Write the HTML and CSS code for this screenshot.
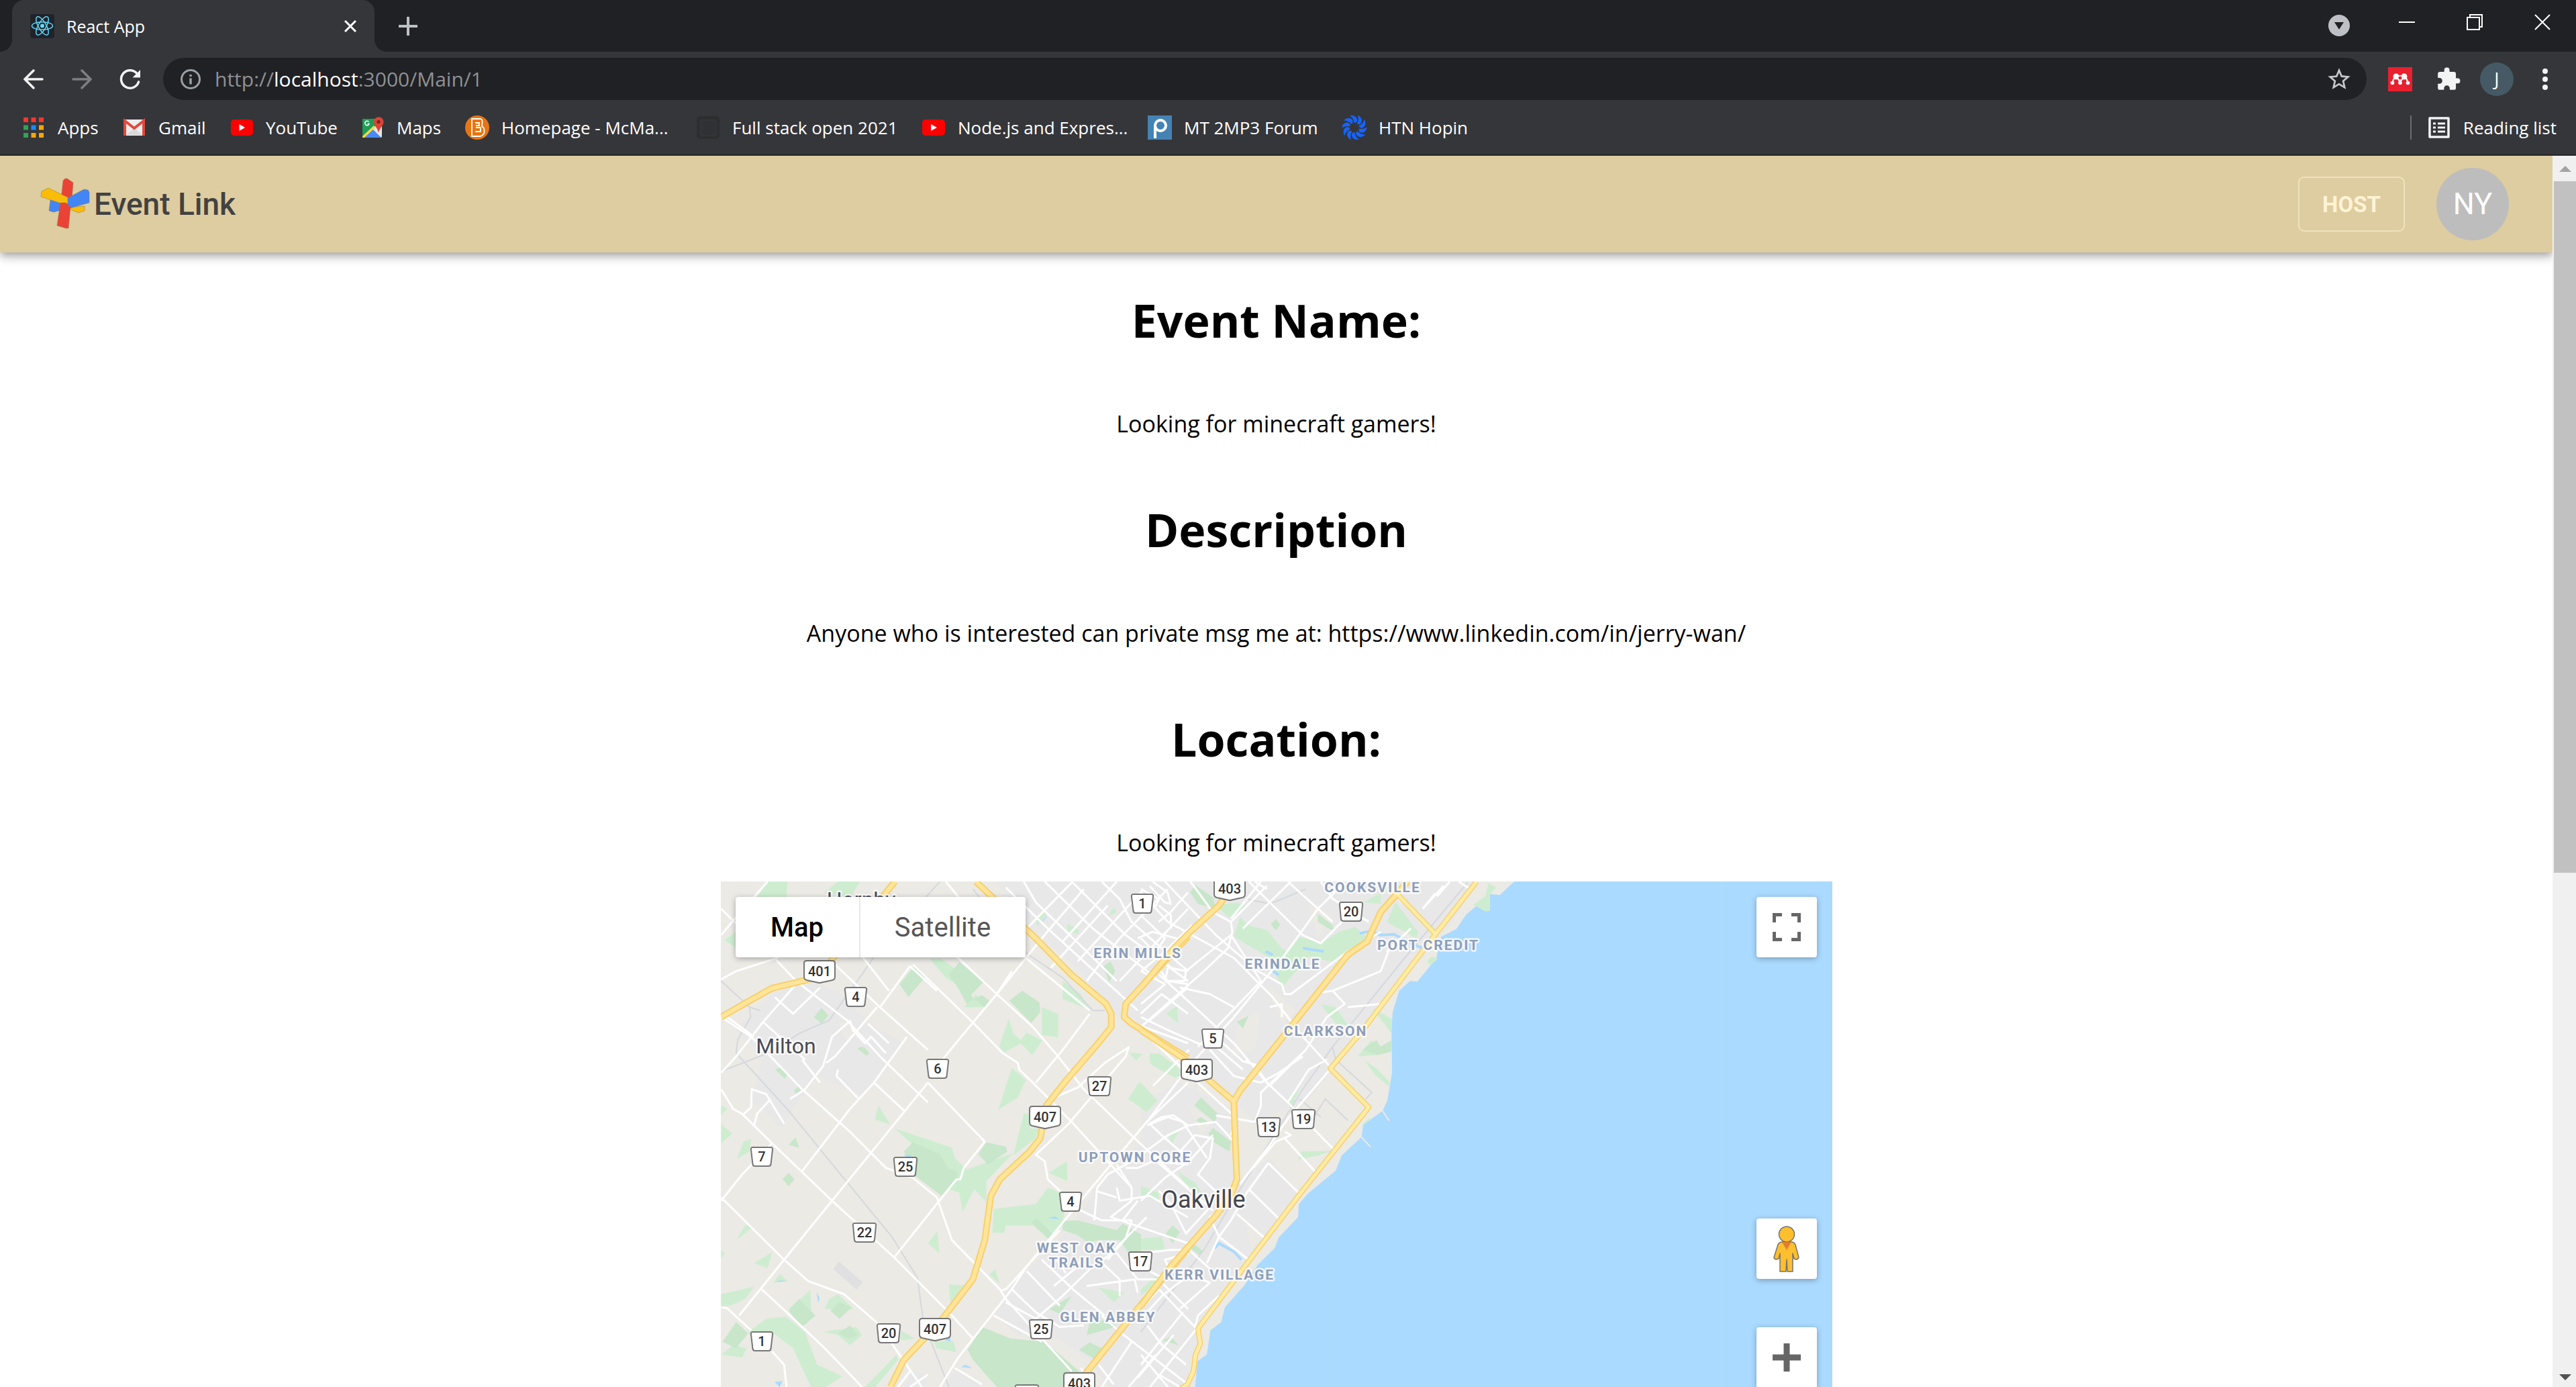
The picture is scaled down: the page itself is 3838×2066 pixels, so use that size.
FILE: index.html
```html
<!DOCTYPE html>
<html lang="en">
<head>
<meta charset="utf-8">
<title>React App</title>
<link rel="stylesheet" href="styles.css">
</head>
<body>
<div class="chrome">
  <div class="tabstrip">
    <div class="tab">
      <svg class="ico36" viewBox="0 0 36 36"><rect width="36" height="36" rx="4" fill="#20232a"/><g fill="none" stroke="#61dafb" stroke-width="1.5"><ellipse cx="18" cy="17.500" rx="15.500" ry="5.800"/><ellipse cx="18" cy="17.500" rx="15.500" ry="5.800" transform="rotate(60 18 17.500)"/><ellipse cx="18" cy="17.500" rx="15.500" ry="5.800" transform="rotate(120 18 17.500)"/></g><circle cx="18" cy="17.500" r="3" fill="#61dafb"/></svg>
      <span class="tab-title">React App</span>
      <button class="plain tab-close" aria-label="Close tab"><svg width="18" height="18" viewBox="0 0 18 18"><path d="M1 1 17 17M17 1 1 17" stroke="#fff" stroke-width="3"/></svg></button>
    </div>
    <button class="plain newtab" aria-label="New tab"><svg width="28" height="28" viewBox="0 0 28 28"><path d="M14 1V27M1 14H27" stroke="#bdc1c6" stroke-width="4" stroke-linecap="round"/></svg></button>
    <div class="window-buttons">
      <button class="plain low" aria-label="Search tabs"><svg width="32" height="32" viewBox="0 0 32 32"><circle cx="16" cy="16" r="16" fill="#bdc1c6"/><path d="M9 11H23L16 22Z" fill="#202124"/></svg></button>
      <button class="plain" aria-label="Minimize"><svg width="24" height="24" viewBox="0 0 24 24"><path d="M0 12H24" stroke="#fff" stroke-width="2"/></svg></button>
      <button class="plain" aria-label="Restore"><svg width="24" height="24" viewBox="0 0 24 24"><path d="M1 5H19V23H1ZM5 5V1H23V19H19" fill="none" stroke="#fff" stroke-width="2"/></svg></button>
      <button class="plain" aria-label="Close"><svg width="24" height="24" viewBox="0 0 24 24"><path d="M1 1 23 23M23 1 1 23" stroke="#fff" stroke-width="2"/></svg></button>
    </div>
  </div>
  <div class="toolbar">
    <button class="plain tool" aria-label="Back"><svg width="30" height="30" viewBox="0 0 30 30"><path d="M28 15H2M15 2 2 15 15 28" fill="none" stroke="#f1f3f4" stroke-width="3.500" stroke-linecap="round"/></svg></button>
    <button class="plain tool" aria-label="Forward"><svg width="30" height="30" viewBox="0 0 30 30"><path d="M2 15H28M15 2 28 15 15 28" fill="none" stroke="#7d7f83" stroke-width="3.500" stroke-linecap="round"/></svg></button>
    <button class="plain tool" aria-label="Reload"><svg width="32" height="32" viewBox="0 0 32 32"><path d="M26.500 8A13.300 13.300 0 1 0 28.500 20" fill="none" stroke="#f1f3f4" stroke-width="3.500" stroke-linecap="round"/><path d="M31 2V13.500H19.500Z" fill="#f1f3f4"/></svg></button>
    <div class="omnibox">
      <svg width="32" height="32" viewBox="0 0 32 32"><circle cx="16" cy="16" r="13.500" fill="none" stroke="#9aa0a6" stroke-width="3"/><path d="M16 9V12M16 14.500V23.500" stroke="#9aa0a6" stroke-width="3.500"/></svg>
      <span class="url">http://<b>localhost</b>:3000/Main/1</span>
      <button class="plain" aria-label="Bookmark this page"><svg width="40" height="40" viewBox="0 0 24 24"><path d="M22 9.240 14.810 8.620 12 2 9.190 8.630 2 9.240 7.460 13.970 5.820 21 12 17.270 18.180 21 16.550 13.970ZM12 15.400 8.240 17.670 9.240 13.390 5.920 10.510 10.300 10.130 12 6.100 13.710 10.140 18.090 10.520 14.770 13.400 15.770 17.680Z" fill="#c6c8ca"/></svg></button>
    </div>
    <button class="plain tool" aria-label="Mendeley"><svg class="ico36" viewBox="0 0 36 36"><rect width="36" height="36" fill="#e9202f"/><path d="M6 23.500 10 14M30 23.500 26 14M14 16 18 23 22 16" fill="none" stroke="#fff" stroke-width="2"/><g fill="#fff"><circle cx="12" cy="14" r="4.500"/><circle cx="24" cy="14" r="4.500"/><circle cx="6.500" cy="23.500" r="2.800"/><circle cx="18" cy="23.500" r="2.800"/><circle cx="29.500" cy="23.500" r="2.800"/><circle cx="18" cy="16" r="4"/></g><circle cx="18" cy="16" r="2.500" fill="#e9202f"/></svg></button>
    <button class="plain tool" aria-label="Extensions"><svg width="38" height="38" viewBox="0 0 24 24"><path d="M20.500 11H19V7a2 2 0 0 0-2-2h-4V3.500a2.500 2.500 0 0 0-5 0V5H4a2 2 0 0 0-2 2v3.800h1.500a2.700 2.700 0 0 1 0 5.400H2V20a2 2 0 0 0 2 2h3.800v-1.500a2.700 2.700 0 0 1 5.400 0V22H17a2 2 0 0 0 2-2v-4h1.500a2.500 2.500 0 0 0 0-5Z" fill="#f1f3f4"/></svg></button>
    <button class="plain tool" aria-label="Profile"><span class="profile">J</span></button>
    <button class="plain tool" aria-label="Menu"><svg width="8" height="32" viewBox="0 0 8 32" fill="#f1f3f4"><circle cx="4" cy="4" r="4"/><circle cx="4" cy="16" r="4"/><circle cx="4" cy="28" r="4"/></svg></button>
  </div>
  <nav class="bookmarks">
    <div class="bookmark-list">
      <a href="#"><svg class="ico36" viewBox="0 0 36 36"><g fill="#f4382f"><path d="M3 3h7v7H3zM14.500 3h7v7h-7zM26 3h7v7h-7z"/></g><path d="M3 14.500h7v7H3zM3 26h7v7H3z" fill="#34a05a"/><path d="M14.500 14.500h7v7h-7z" fill="#1e88f5"/><path d="M26 14.500h7v7h-7zM14.500 26h7v7h-7zM26 26h7v7h-7z" fill="#f5a70a"/></svg>Apps</a>
      <a href="#"><svg class="ico36" viewBox="0 0 36 36"><path d="M3 6H33V30H3Z" fill="#ececec"/><path d="M6 29 18 19 30 29Z" fill="#d9d9d9"/><path d="M4 30V8L18 19 32 8V30" fill="none" stroke="#de4a3e" stroke-width="4"/></svg>Gmail</a>
      <a href="#"><svg class="ico36" viewBox="0 0 36 36"><rect x="2" y="6" width="33" height="24" rx="5" fill="#f00"/><path d="M14.500 13V23L23 18Z" fill="#fff"/></svg>YouTube</a>
      <a href="#"><svg class="ico36" viewBox="0 0 36 36"><rect x="3" y="5" width="29" height="28" rx="2" fill="#e6e6e6"/><path d="M3 5H26L23 15 3 33Z" fill="#1f9d57"/><path d="M4 33 18 20 31 33Z" fill="#4a89f3"/><path d="M3 31 20 15 22 18 6 33H3Z" fill="#ffd83b"/><path d="M12.500 9.500A3.200 3.200 0 1 0 13 12.500H10.500" stroke="#fff" stroke-width="1.500" fill="none"/><path d="M27 26C26 19 20 15 20 9.500a7 7 0 0 1 14.500 0C34.500 15 28 19 27 26Z" fill="#db4437"/><circle cx="27" cy="9.500" r="2.600" fill="#7b231c"/></svg>Maps</a>
      <a href="#"><svg class="ico36" viewBox="0 0 36 36"><circle cx="18" cy="18" r="18" fill="#e87511"/><path d="M10 5H23Q26 6 25.500 11L25 16Q29 18 28.500 25Q27 30 22 31H10Z" fill="none" stroke="#fff" stroke-width="1.800"/><path d="M15 11H21V15H16M16 18H23V24H15" fill="none" stroke="#fff" stroke-width="2"/></svg>Homepage - McMa...</a>
      <a href="#"><svg class="ico36" viewBox="0 0 36 36"><rect x="1" y="1" width="34" height="34" rx="5" fill="#2d2e30"/><rect x="7" y="7" width="23" height="23" rx="2" fill="#303134" stroke="#3a3b3e"/></svg>Full stack open 2021</a>
      <a href="#"><svg class="ico36" viewBox="0 0 36 36"><rect x="1" y="6" width="34" height="24" rx="5" fill="#f00"/><path d="M14 13V23L23 18Z" fill="#fff"/></svg>Node.js and Expres...</a>
      <a href="#"><svg class="ico36" viewBox="0 0 36 36"><rect width="36" height="36" fill="#4583b4"/><circle cx="19" cy="15" r="8" fill="none" stroke="#fff" stroke-width="4"/><path d="M11 34V15" stroke="#fff" stroke-width="4"/></svg>MT 2MP3 Forum</a>
      <a href="#"><svg class="ico36" viewBox="0 0 36 36" fill="#1664ff"><defs><path id="petal" d="M11 0C18-1 22 3 22 7Q22 11 17.500 11C17 6 15 3 11 0Z"/></defs><use href="#petal"/><use href="#petal" transform="rotate(36 18 18)"/><use href="#petal" transform="rotate(72 18 18)"/><use href="#petal" transform="rotate(108 18 18)"/><use href="#petal" transform="rotate(144 18 18)"/><use href="#petal" transform="rotate(180 18 18)"/><use href="#petal" transform="rotate(216 18 18)"/><use href="#petal" transform="rotate(252 18 18)"/><use href="#petal" transform="rotate(288 18 18)"/><use href="#petal" transform="rotate(324 18 18)"/></svg>HTN Hopin</a>
    </div>
    <a class="reading" href="#"><svg class="ico36" viewBox="0 0 36 36"><path d="M4 4H32V32H4Z" fill="none" stroke="#f1f3f4" stroke-width="3.500" stroke-linejoin="round"/><path d="M9 12H13M16 12H27M9 18H13M16 18H27M9 24H13M16 24H27" stroke="#f1f3f4" stroke-width="3"/></svg>Reading list</a>
  </nav>
</div>

<div class="viewport">
  <div class="page">
    <header class="appbar">
      <a class="brand" href="#">
        <svg width="78" height="78" viewBox="0 0 78 78"><g stroke="#8a7a50" stroke-opacity=".5"><path d="M15 33 38 30V46L20 51 13 49Z" fill="#4285f4"/><path d="M40 44 66 42V49L57 52 47 48Z" fill="#fbbc05"/><path d="M34 4 37 1H40L49 7 47 32H31Z" fill="#ea4335"/><path d="M35 33 65 17 71 18 73 21V37L41 46Z" fill="#4285f4"/><path d="M2 20 12 15 41 29V38L37 40 1 28Z" fill="#fbbc05"/><path d="M30 37 38 37 45 43 42 75H38L25 71Z" fill="#ea4335"/></g></svg>
        <span>Event Link</span>
      </a>
      <button class="host">HOST</button>
      <div class="avatar">NY</div>
    </header>
    <main class="content">
      <h1>Event Name:</h1>
      <p>Looking for minecraft gamers!</p>
      <h1>Description</h1>
      <p>Anyone who is interested can private msg me at: https://www.linkedin.com/in/jerry-wan/</p>
      <h1>Location:</h1>
      <p>Looking for minecraft gamers!</p>
      <section class="map">
        <svg class="map-tiles" viewBox="0 0 1656 753" preserveAspectRatio="xMidYMin slice">
          <defs>
            <path id="kh" d="M-23-12Q-23-16-19-16H19Q23-16 23-12V8Q23 12 19 13L3 16.500Q0 17.500-3 16.500L-19 13Q-23 12-23 8Z"/>
            <path id="r1" d="M-13-14H13Q17-14 16-10L13.500 11Q13 14 10 14H-10Q-13 14-13.500 11L-16-10Q-17-14-13-14Z"/>
            <path id="r2" d="M-14-14H14Q18-14 17-10L15 11Q14.500 14 11 14H-11Q-14.500 14-15 11L-17-10Q-18-14-14-14Z"/>
          </defs>
          <rect width="1656" height="753" class="land"/>

          <!-- west half: built-up areas and parks -->
          <g transform="matrix(.44643 0 0 .48852 -4 -13)">
            <path class="urban" d="M930 27H1600V580L1400 490 1330 440 1200 290 1060 190ZM60 480 200 345 290 325 400 360 520 470 620 520 560 600 480 680 380 640 330 620 270 690 210 780 110 690 150 560ZM1600 640 1430 760 1400 830 1260 960 1180 1080 960 1280 920 1350 1000 1410 1140 1420 1250 1500 1300 1568H1600ZM620 1568 650 1520 700 1530 690 1568ZM760 1568 790 1520 860 1540 870 1568Z"/>
            <path class="greyland" d="M403 1185 482 1248 462 1271 384 1208Z"/>
            <path class="rural" d="M1400 500 1568 570V640L1460 740 1250 640 1330 540ZM90 400 140 390 130 420ZM400 450 460 470 430 520Z"/>
            <path class="park" d="M165 27H232L228 75H130ZM400 27H475L440 75 355 60ZM20 205 60 180V230ZM705 262 745 262 800 300 795 340 760 320ZM820 410 860 370 890 410ZM1150 330 1165 340 1210 370 1240 418 1150 385ZM970 445 985 490 1010 510 1030 487 1082 512 1048 557 1010 520 955 548 938 530ZM1080 410 1135 430V502L1080 495ZM980 595 1027 632 1000 685 935 722ZM1405 638 1466 692 1430 728 1368 690ZM1020 735H1040V780H1070L1060 810 985 862ZM535 710 575 768 523 752ZM590 780 780 838 790 870 830 905 985 855 895 940V1005L855 965 815 1035 805 975 770 965 700 950 740 870 650 830ZM10 765 47 796 10 825ZM62 872 85 820 110 812 105 850ZM10 710 32 720 10 738ZM1165 880V940L1103 915ZM920 1025 1060 1010 1100 960 1165 985 1150 1060 1110 1120 1050 1075 960 1075 955 1098 915 1097ZM700 1130 732 1092 738 1160ZM60 1120 90 1075 118 1080ZM120 1190 180 1157 165 1205ZM10 1150 22 1162 10 1175ZM185 1250 205 1223 232 1245ZM905 1225 925 1207 938 1252ZM770 1255 820 1258 835 1262 775 1310ZM235 1330 308 1272 310 1335ZM10 1285 120 1262 90 1300 40 1320 10 1322ZM355 1330 370 1300 400 1285 452 1330ZM100 1400 160 1360 225 1353 290 1400 330 1500 415 1535 360 1568H310L250 1450 180 1400 120 1435ZM12 1470 50 1440 95 1450 80 1478ZM595 1470 600 1485 525 1568H490ZM610 1395 655 1420 610 1425ZM720 1430 785 1428 795 1462 730 1450ZM350 1400 460 1385 480 1410 440 1440 400 1410ZM1370 548 1415 552 1395 573ZM1440 550 1470 552 1530 590 1530 628 1445 585ZM1060 135 1100 118 1065 165ZM1165 155 1205 175 1200 188 1165 175ZM1525 405 1540 440 1535 458 1480 450ZM1320 105 1330 120 1300 135ZM1430 1140 1568 1110V1135L1450 1150ZM1480 1425 1530 1425 1535 1440ZM1270 1265 1355 1280 1320 1310ZM1450 855 1490 830 1480 870Z"/>
            <path class="park deep" d="M605 340 655 285 692 318 635 378ZM770 310 805 272 885 333 845 372 850 385 830 400 800 350ZM855 385 880 373 905 390 890 410ZM972 390 1015 360 1072 395 1075 425 1045 458ZM320 440 345 412 368 435 345 460ZM190 600 205 594 235 612 222 628ZM253 665 268 650 275 665 262 680ZM463 535 485 530 505 550 495 558ZM235 830 258 807 270 838ZM215 935 235 915 255 935 235 955ZM868 858 895 822 960 835 965 850 900 890ZM620 850 650 822 740 858 770 905 795 908 800 930 745 985 660 925ZM1150 1062 1200 1060 1330 1090 1350 1070 1435 1115 1460 1115 1450 1150 1370 1160 1340 1120 1270 1120 1235 1128 1200 1105 1150 1090ZM1045 1065 1065 1055 1120 1105 1105 1120ZM1285 285 1310 270 1325 300 1305 335ZM833 1455 880 1385 975 1420 1090 1430 1215 1528 1200 1568H930L850 1485ZM1205 1455 1240 1432 1280 1450 1270 1490ZM235 1335 270 1300 325 1350 280 1385ZM375 1335 405 1310 445 1325 405 1360ZM15 1430 60 1370 100 1405 60 1450ZM400 1405 440 1380 465 1410 435 1420ZM1240 1370 1320 1360 1325 1385 1230 1410ZM1105 1330 1180 1290 1140 1345ZM1490 1100 1520 1080 1540 1095 1520 1120Z"/>
            <path class="lake" d="M1100 1052 1125 1048 1140 1058ZM195 1248 205 1243 232 1245ZM328 1280 338 1295 334 1312ZM188 1552 215 1550 205 1568ZM810 1507 825 1500 848 1510ZM618 860 645 862 640 872ZM755 1425 775 1415 775 1430ZM1072 160 1098 127 1092 140Z"/>
          </g>

          <!-- east half: built-up areas, parks, lake -->
          <g transform="matrix(.44643 0 0 .48852 626 -13)">
            <path class="urban" d="M0 27H1120L1040 150 870 330 740 480 640 600 560 690 380 760 310 700 230 630 0 480ZM0 700 120 640 310 720 325 940 430 870 530 980 415 1110 300 1260 190 1385 140 1540 110 1568H0Z"/>
            <path class="rural" d="M330 440 400 420 380 540 300 560ZM420 340 520 420 470 460ZM120 160 200 190 160 210ZM560 100 640 130 590 200ZM850 160 930 190 900 220ZM340 1040 400 1110 370 1150ZM150 700 240 760 200 800Z"/>
            <path class="water" d="M1245 27 1197 68 1165 65 1085 128 1052 172 1002 195 985 262 922 332 898 330 862 360 840 425 836 480 838 610 822 695 806 726 742 768 736 806 670 862 650 908 555 980 527 1010 524 1050 460 1112 446 1145 390 1195 345 1258 280 1325 268 1370 232 1395 220 1468 188 1490 180 1580H2400V20H1245Z"/>
            <path class="park" d="M330 135 360 160 420 175 470 230 490 240 530 195 600 215 660 180 715 165 765 205 690 240 650 275 560 255 470 350 450 310 430 260 310 195ZM250 100 320 90 348 100 300 140ZM745 90 800 60V95ZM820 150 850 90 925 180 920 200ZM1160 30 1185 45 1165 65 1165 115 1150 118 1110 98 1150 70ZM955 270 970 255 990 262 965 283ZM600 400 650 410 690 465 650 460ZM775 415 838 445 836 490ZM722 560 770 510 800 530 836 512V545L790 555ZM745 570 790 600 832 640 825 650 780 615ZM0 640 55 695 20 728 0 720ZM28 560 60 550 130 600V625L30 580ZM523 875 535 850 640 848 600 860ZM735 770 765 745V755ZM490 700 530 655 500 720ZM120 910 180 945 210 985 150 950ZM0 1115 70 1110 80 1150 0 1150ZM0 955 60 975V1000L0 985ZM95 800 125 790 100 830ZM0 1270 60 1220 50 1250 0 1290ZM85 430 120 405 125 460ZM0 27Z"/>
            <path class="park deep" d="M165 60 180 37 240 75 250 110 190 95ZM590 125 640 160 645 180 590 150ZM433 158 450 142 465 158 450 175ZM740 540 785 510 800 530 836 512V545L790 555ZM200 685 257 735 245 760 178 710ZM182 755 200 745 228 762 210 768ZM225 795 240 778 300 820 295 850 240 820ZM320 455 360 435 340 475ZM82 1100 105 1075 130 1095 105 1130ZM165 1145 175 1130 208 1155 195 1165ZM70 1425 100 1415 125 1440Z"/>
            <path class="lakeline" d="M730 185 765 178 800 190 845 188 900 215 940 230M540 230 610 240M245 1145 260 1130 310 1155 335 1180M415 240 440 250M440 300 460 312"/>
            <path class="shore" d="M806 726 828 756M736 806 766 836"/>
            <path d="M640 920V1580" class="seam"/><path d="M1937 27V1580" class="seam"/>
          </g>

          <!-- railways -->
          <g class="rail" transform="matrix(.44643 0 0 .48852 -4 -13)"><path d="M740 27 540 230 480 310 370 450 270 490 180 545 20 602M10 330 105 410 108 440 65 510 60 550 230 720 400 910 580 1110 665 1235 685 1370 770 1568M850 50 1020 240 1150 320 1250 420 1290 420M105 410 140 420"/></g>
          <g class="rail" transform="matrix(.44643 0 0 .48852 626 -13)"><path d="M1090 30 880 260 640 530 540 660 410 850 320 980 210 1150 0 1400M350 80 430 95 550 50M640 535 650 570 770 670 750 690M580 740 615 690 690 755M530 690 600 745"/></g>

          <!-- streets -->
          <g class="street" transform="matrix(.44643 0 0 .48852 -4 -13)">
            <path d="M165 27 60 135 10 190M10 110 60 155M10 325 60 300 190 262 290 220M190 262 260 330 430 450 540 560 700 700M10 440 110 500 180 565 280 660 440 790 560 900 650 930 730 990 780 1120 940 1270 960 1300 1080 1420 1180 1520M10 610 60 560 150 455 260 340M30 440 120 500M10 660 50 720 80 735 180 825 380 1000 590 1175 780 1350 850 1420M10 990 220 1180 300 1245 420 1285 540 1380M560 1410 680 1568M10 1325 30 1328 110 1395M145 1270 240 1350 350 1445 430 1520 480 1568M180 1460 220 1500 228 1568"/>
            <path d="M390 280 540 410 700 540M480 255 570 360M530 410 390 560 360 580M640 285 540 410M850 457 930 370 1080 200 1220 50M850 457 730 590M700 640 540 820 380 1000 220 1180 70 1350M630 500 520 640 440 720 280 910M180 825 80 920 10 1000M700 640 890 820 820 900 808 935 795 935 590 1170M730 360 640 285M650 280 850 457 950 550 1000 580 1005 600 1050 640 1180 760 1380 960M720 190 930 370 1050 470 1130 555 1220 660 1390 810 1568 960M980 300 930 370M760 27 870 150 1000 240 1240 420M1060 640 1150 540 1240 430"/>
            <path d="M80 740 110 715 112 660 160 675 220 765M120 770 130 735 175 690M240 690 290 660 350 590 380 500 440 452 450 480 490 520 510 500 560 550M500 460 570 520M400 600 395 620 470 690M520 640 620 725M280 570 340 640M150 455 290 570M190 380 250 430 340 350"/>
            <path d="M1110 690 1200 655 1290 580 1370 532 1360 560 1170 765 1060 860 1090 880 1100 935 1210 1030 1280 1060 1380 1060 1360 1115 1300 1180M1568 640 1430 760 1210 1000 1120 1100 1030 1200 980 1270 800 1480 740 1568M1140 1090 960 1270 940 1275M1568 770 1520 740 1480 745 1440 765 1480 800 1568 870M1400 870 1300 920 1265 960 1255 1060M1330 890 1380 960 1380 1000 1310 1050 1568 1130M1568 890 1450 880 1400 900 1360 900M1330 960 1340 1000 1440 985 1568 1050M1400 1000 1350 1060M1260 970 1330 990"/>
            <path d="M960 1310 1060 1360 1150 1290 1250 1200 1300 1170 1430 1050M980 1270 1060 1340 1140 1385 1220 1380M1030 1215 1140 1320M1080 1180 1190 1275 1290 1350M1120 1260 1200 1200 1210 1180M1230 1260 1390 1240 1400 1280M1160 1220 1130 1180M920 1350 1020 1400 1080 1430M1270 1180 1340 1240 1340 1290M1330 1160 1400 1240 1470 1240 1568 1330M1280 1350 1340 1400 1568 1560M1380 1430 1280 1568M1460 1470 1370 1568M1520 1410 1400 1540M1270 1500 1320 1560M1210 1510 1250 1560"/>
            <path d="M960 45 1100 170 1280 320 1400 420M1020 27 1060 90 1230 240 1330 330M1090 27 1250 170 1460 320M1180 27 1360 190 1568 330M1280 27 1340 80 1380 150 1568 300M1150 210 1330 27M1030 170 1180 30M1230 330 1340 200 1500 50M1340 330 1568 110M1200 270 1420 50M1400 200 1450 180 1568 210M1470 290 1500 330 1568 340M1440 450 1568 350M1390 460 1568 520M1470 150 1510 120 1568 60M1440 40 1490 90 1510 95 1500 60 1450 27M1110 290 1300 100M1568 430 1480 370 1410 430"/>
            <path d="M640 1520 600 1568M700 1530 640 1568M790 1510 880 1560"/>
          </g>
          <g class="street" transform="matrix(.44643 0 0 .48852 626 -13)">
            <path d="M0 60 90 150 310 260 440 380 540 500 640 600M80 27 250 190 390 300 470 340 480 370 500 370 690 240 800 180M300 150 305 180 290 230 210 300 0 470M300 150 420 40M165 27 240 120 300 150M360 27 540 190 600 215 680 140 700 130M490 27 640 150M600 27 640 80 760 150M480 250 520 200 590 110 680 30M60 310 180 410 310 520 420 640 490 700M150 300 300 190 400 330 190 530M0 200 100 290 150 300 145 330 80 330 90 290M0 440 90 480 190 520 250 530 340 600M480 250 310 440 250 500 160 590 20 760M350 570 390 600 430 650 550 540 620 440 680 400 640 360 800 300 830 230M690 410 800 400M640 360 600 365M430 410 470 400 470 440M230 540 310 620 400 640 460 610 540 560M250 500 340 575 400 590"/>
            <path d="M380 760 400 710 400 670 480 600 550 540M490 700 560 600 620 570M640 590 490 750 430 830 330 950M490 700 650 850M480 810 580 910M425 885 525 975M360 965 460 1055M320 1040 410 1112M250 740 380 760M345 930 450 820 500 800 480 790M425 885 350 980 300 1060 260 1110 360 1180M220 1190 260 1110 230 1050 300 1000M60 970 100 1010 150 1100 240 1010M40 870 240 1030M0 860 90 800 160 770 250 760 320 830M100 880 180 800 240 810 230 870 190 920 260 980M20 770 90 745 140 760 220 870M0 1000 80 930 160 880 240 800M160 540 40 650M0 480 320 750 300 800M940 110 1010 40M860 80 980 180M940 110 980 65 990 70 1030 27M1060 27 1100 50M900 170 820 240"/>
            <path d="M0 1160 100 1150 160 1150 270 1240M60 1270 180 1385 190 1350 260 1290M10 1320 60 1270M130 1330 230 1250 150 1220M0 1470 90 1568M0 1360 70 1290 170 1220M190 1385 30 1568M140 1340 0 1500M60 1530 130 1568M20 1380 70 1440 150 1500M0 1200 60 1230 100 1220 80 1180 160 1160M0 300 80 240 170 160M0 130 80 200 50 240M0 400 80 340 0 300M130 350 230 370 310 410M60 100 100 130V170M340 170 500 27M400 27 300 140M420 50 380 27M0 50 60 80 50 100 0 90"/>
          </g>

          <!-- highways -->
          <g transform="matrix(.44643 0 0 .48852 -4 -13)">
            <g class="casing"><path id="w1" d="M10 440 90 398 180 352 260 335 340 315 400 240 590 27M860 27 1060 200 1180 312 1295 400 1312 430V470L1270 518 1160 635 1095 710 1075 810 1040 850 940 935 910 985 890 1120 850 1240 740 1370 620 1485 575 1568M1568 195 1460 300 1360 400 1355 440 1380 460 1568 565M1568 1145 1400 1330 1215 1540"/></g>
            <g class="road"><use href="#w1"/></g>
          </g>
          <g transform="matrix(.44643 0 0 .48852 626 -13)">
            <g class="casing"><path id="e1" d="M0 350 110 230 170 175 260 100 290 60M0 480 140 565 310 697 315 830 320 935 300 985 250 1045 100 1200 0 1320M310 697 330 665 500 470 690 250 755 210 800 120 890 27"/></g>
            <g class="casing thin"><path id="e2" d="M855 65 983 187M1120 27 983 187 740 480 632 597 760 715 530 980 330 1220 190 1390 198 1435 182 1470 175 1520 155 1560 130 1575"/></g>
            <g class="road"><use href="#e1"/></g>
            <g class="road thin"><use href="#e2"/></g>
          </g>

          <g class="area">
            <text x="621" y="114">ERIN MILLS</text><text x="837" y="130">ERINDALE</text><text x="971" y="16">COOKSVILLE</text><text x="1054" y="102">PORT CREDIT</text><text x="901" y="230">CLARKSON</text><text x="617" y="418">UPTOWN CORE</text><text x="530" y="553">WEST OAK</text><text x="530" y="575">TRAILS</text><text x="743" y="593">KERR VILLAGE</text><text x="577" y="656">GLEN ABBEY</text>
          </g>
          <g class="town"><text x="97" y="256">Milton</text><text x="209" y="38">Hornby</text><text class="city" x="719" y="486">Oakville</text></g>

          <g class="shield">
            <g transform="translate(147 134)"><use href="#kh"/><text y="7">401</text></g>
            <g transform="translate(201 172)"><use href="#r1"/><text y="7">4</text></g>
            <g transform="translate(323 279)"><use href="#r1"/><text y="7">6</text></g>
            <g transform="translate(628 33)"><use href="#r1"/><text y="7">1</text></g>
            <g transform="translate(564 305)"><use href="#r2"/><text y="7">27</text></g>
            <g transform="translate(483 351)"><use href="#kh"/><text y="7">407</text></g>
            <g transform="translate(61 410)"><use href="#r1"/><text y="7">7</text></g>
            <g transform="translate(275 425)"><use href="#r2"/><text y="7">25</text></g>
            <g transform="translate(214 523)"><use href="#r2"/><text y="7">22</text></g>
            <g transform="translate(521 477)"><use href="#r1"/><text y="7">4</text></g>
            <g transform="translate(625 566)"><use href="#r2"/><text y="7">17</text></g>
            <g transform="translate(250 673)"><use href="#r2"/><text y="7">20</text></g>
            <g transform="translate(319 667)"><use href="#kh"/><text y="7">407</text></g>
            <g transform="translate(477 667)"><use href="#r2"/><text y="7">25</text></g>
            <g transform="translate(61 685)"><use href="#r1"/><text y="7">1</text></g>
            <g transform="translate(534 748)"><use href="#kh"/><text y="7">403</text></g>
            <g transform="translate(456 764)"><use href="#r2"/></g>
            <g transform="translate(758 11)"><use href="#kh"/><text y="7">403</text></g>
            <g transform="translate(939 45)"><use href="#r2"/><text y="7">20</text></g>
            <g transform="translate(733 234)"><use href="#r1"/><text y="7">5</text></g>
            <g transform="translate(709 281)"><use href="#kh"/><text y="7">403</text></g>
            <g transform="translate(816 366)"><use href="#r2"/><text y="7">13</text></g>
            <g transform="translate(868 354)"><use href="#r2"/><text y="7">19</text></g>
          </g>
        </svg>
        <div class="map-type">
          <button class="on">Map</button><button>Satellite</button>
        </div>
        <div class="map-controls">
          <button class="square" aria-label="Toggle fullscreen"><svg width="42" height="42" viewBox="0 0 42 42"><path d="M14 2.500H2.500V14M28 2.500H39.500V14M14 39.500H2.500V28M28 39.500H39.500V28" fill="none" stroke="#666" stroke-width="5"/></svg></button>
          <button class="square street-view" aria-label="Street View"><svg width="40" height="70" viewBox="0 0 40 70"><g fill="#fdbf2d" stroke="#737373" stroke-width="1.500" stroke-linejoin="round"><path d="M12 25H28Q32 26 33 29L38 48Q37 51 34 51L31 50 29 42V69H21L20 51 19 69H10V42L8 50 4 51Q1 50 1 48L7 29Q8 26 12 25Z"/><circle cx="20" cy="13.500" r="11.500"/></g><path d="M13 25H27L20 37Z" fill="#e07f2d"/></svg></button>
          <button class="square zoom-in" aria-label="Zoom in"><svg width="42" height="42" viewBox="0 0 42 42"><path d="M21 0V42M0 21H42" stroke="#666" stroke-width="9"/></svg></button>
        </div>
      </section>
    </main>
  </div>
  <div class="scrollbar">
    <svg width="36" height="38" viewBox="0 0 36 38"><path d="M10 24H28L19 15Z" fill="#a3a3a3"/></svg>
    <div class="thumb"></div>
    <svg width="36" height="38" viewBox="0 0 36 38"><path d="M10 19H28L19 28Z" fill="#505050"/></svg>
  </div>
</div>
</body>
</html>
```
FILE: styles.css
```css
* { box-sizing: border-box; }
body {
  margin: 0;
  height: 100vh;
  display: flex;
  flex-direction: column;
  overflow: hidden;
  background: #fff;
  color: #000;
  font-family: "Open Sans", "Noto Sans", sans-serif;
}
svg { display: block; flex: none; }
a { color: inherit; text-decoration: none; }
button { font: inherit; }
.plain {
  padding: 0;
  border: 0;
  background: none;
  color: inherit;
  display: flex;
  align-items: center;
  justify-content: center;
}
.ico36 { width: 36px; height: 36px; }

/* browser frame */
.chrome { background: #35363a; color: #fff; font-size: 26px; border-bottom: 2px solid #252628; }
.tabstrip { display: flex; align-items: center; height: 77px; background: #202124; padding-left: 18px; }
.tab {
  position: relative;
  width: 540px;
  height: 77px;
  background: #35363a;
  border-radius: 18px 18px 0 0;
  display: flex;
  align-items: center;
  gap: 18px;
  padding: 0 27px;
}
.tab::before, .tab::after {
  content: "";
  position: absolute;
  bottom: 0;
  width: 18px;
  height: 18px;
}
.tab::before { left: -18px; background: radial-gradient(circle at 0 0, #202124 18px, #35363a 18px); }
.tab::after { right: -18px; background: radial-gradient(circle at 100% 0, #202124 18px, #35363a 18px); }
.tab-title { flex: 1; font-size: 25px; }
.newtab { margin-left: 36px; }
.window-buttons { display: flex; margin-left: auto; height: 66px; align-self: flex-start; }
.window-buttons .plain { width: 101px; }
.window-buttons .low { padding-top: 10px; }
.toolbar { display: flex; align-items: center; padding: 9px 10px 9px 14px; }
.tool { width: 72px; height: 63px; }
.omnibox {
  flex: 1;
  height: 63px;
  margin: 0 14px 0 13px;
  padding: 0 21px 0 25px;
  border-radius: 32px;
  background: #202124;
  display: flex;
  align-items: center;
  gap: 20px;
}
.url { flex: 1; font-size: 30px; color: #8e9195; }
.url b { font-weight: 400; color: #fff; }
.profile {
  width: 50px;
  height: 50px;
  border-radius: 50%;
  background: #455a64;
  font-size: 27px;
  line-height: 50px;
  text-align: center;
}
.bookmarks { display: flex; align-items: center; justify-content: space-between; height: 72px; padding: 0 29px 9px 32px; }
.bookmark-list { display: grid; grid-template-columns: 150px 160px 195px 156px 344px 336px 337px 290px auto; }
.bookmarks a { display: flex; align-items: center; gap: 18px; white-space: nowrap; }
.bookmarks .reading { border-left: 2px solid #6b6c70; padding-left: 23px; }

/* scrolled window */
.viewport { flex: 1; min-height: 0; display: flex; }
.page { flex: 1; display: flex; flex-direction: column; overflow: hidden; }
.scrollbar { width: 35px; background: #f0f0f0; display: flex; flex-direction: column; }
.thumb { height: 1030px; margin-left: 2px; background: #c1c1c1; margin-bottom: auto; }

.appbar {
  position: relative;
  flex: none;
  height: 144px;
  padding: 0 65px 0 60px;
  display: flex;
  align-items: center;
  background: #decda0;
  box-shadow: 0 4px 9px -2px rgba(0,0,0,.2), 0 9px 11px 0 rgba(0,0,0,.14), 0 2px 22px 0 rgba(0,0,0,.12);
  font-family: Roboto, sans-serif;
}
.brand { display: flex; align-items: center; gap: 2px; margin-right: auto; font-size: 46px; font-weight: 500; color: #424242; }
.host {
  width: 159px;
  height: 82px;
  margin-right: 47px;
  border: 2px solid #efe2bd;
  border-radius: 9px;
  background: none;
  color: #fff3d6;
  font-size: 33px;
  font-weight: 700;
}
.avatar {
  width: 108px;
  height: 108px;
  border-radius: 50%;
  background: #bdbdbd;
  color: #fff;
  font-size: 45px;
  line-height: 108px;
  text-align: center;
}

.content { flex: 1; min-height: 0; display: flex; flex-direction: column; align-items: center; padding-top: 53px; text-align: center; }
.content h1 { margin: 0 0 82px; font-size: 68px; line-height: 96px; font-weight: 700; }
.content p { margin: 0 0 86px; font-size: 34px; line-height: 48px; }
.content p:last-of-type { margin-bottom: 34px; }

/* map */
.map { position: relative; flex: 1; min-height: 0; width: 100%; max-width: 1656px; overflow: hidden; background: #aadaff; font-family: Roboto, sans-serif; }
.map-tiles { width: 100%; height: 100%; }
.map-tiles path { vector-effect: non-scaling-stroke; }
.land, .rural { fill: #ebeae5; }
.urban { fill: #e8e8e8; }
.greyland { fill: #e0e0e2; }
.park { fill: #ceedd0; }
.deep { fill: #c8e6c9; }
.water, .lake { fill: #aadaff; }
.lakeline { fill: none; stroke: #aadaff; stroke-width: 4; }
.shore { fill: none; stroke: #ebeae5; stroke-width: 2; }
.seam { stroke: #b5dcfa; stroke-width: 1; }
.rail { fill: none; stroke: #d5d8dc; stroke-width: 2; }
.street { fill: none; stroke: #fff; stroke-width: 3; stroke-linejoin: round; }
.casing, .road { fill: none; stroke-linejoin: round; }
.casing { stroke: #f9cf6c; stroke-width: 10; }
.road { stroke: #ffe599; stroke-width: 6; }
.casing.thin { stroke-width: 8; }
.road.thin { stroke: #ffeca5; stroke-width: 5; }
.area text, .town text { text-anchor: middle; paint-order: stroke; stroke: #fff; stroke-opacity: .8; stroke-width: 5; stroke-linejoin: round; }
.area { font-size: 21px; font-weight: 700; letter-spacing: 2px; fill: #8d9dba; }
.town { font-size: 32px; fill: #4b4b55; }
.town .city { font-size: 36px; fill: #44474d; }
.shield use { fill: #fff; stroke: #777; stroke-width: 2; }
.shield text { font-size: 20px; font-weight: 500; text-anchor: middle; fill: #333; }

.map-type { position: absolute; top: 23px; left: 22px; display: flex; border-radius: 4px; background: #fff; box-shadow: 0 2px 9px rgba(0,0,0,.3); }
.map-type button { height: 90px; padding: 0; width: 248px; border: 0; border-left: 2px solid #e8e8e8; background: none; font-size: 40px; color: #565656; }
.map-type .on { width: 184px; border-left: 0; font-weight: 500; color: #000; }
.map-controls { position: absolute; top: 23px; right: 23px; display: flex; flex-direction: column; }
.square {
  width: 90px;
  height: 90px;
  padding: 0;
  border: 0;
  border-radius: 4px;
  background: #fff;
  box-shadow: 0 2px 9px rgba(0,0,0,.3);
  display: flex;
  align-items: center;
  justify-content: center;
}
.street-view { margin-top: 389px; }
.zoom-in { margin-top: 72px; border-radius: 4px 4px 0 0; }
```
